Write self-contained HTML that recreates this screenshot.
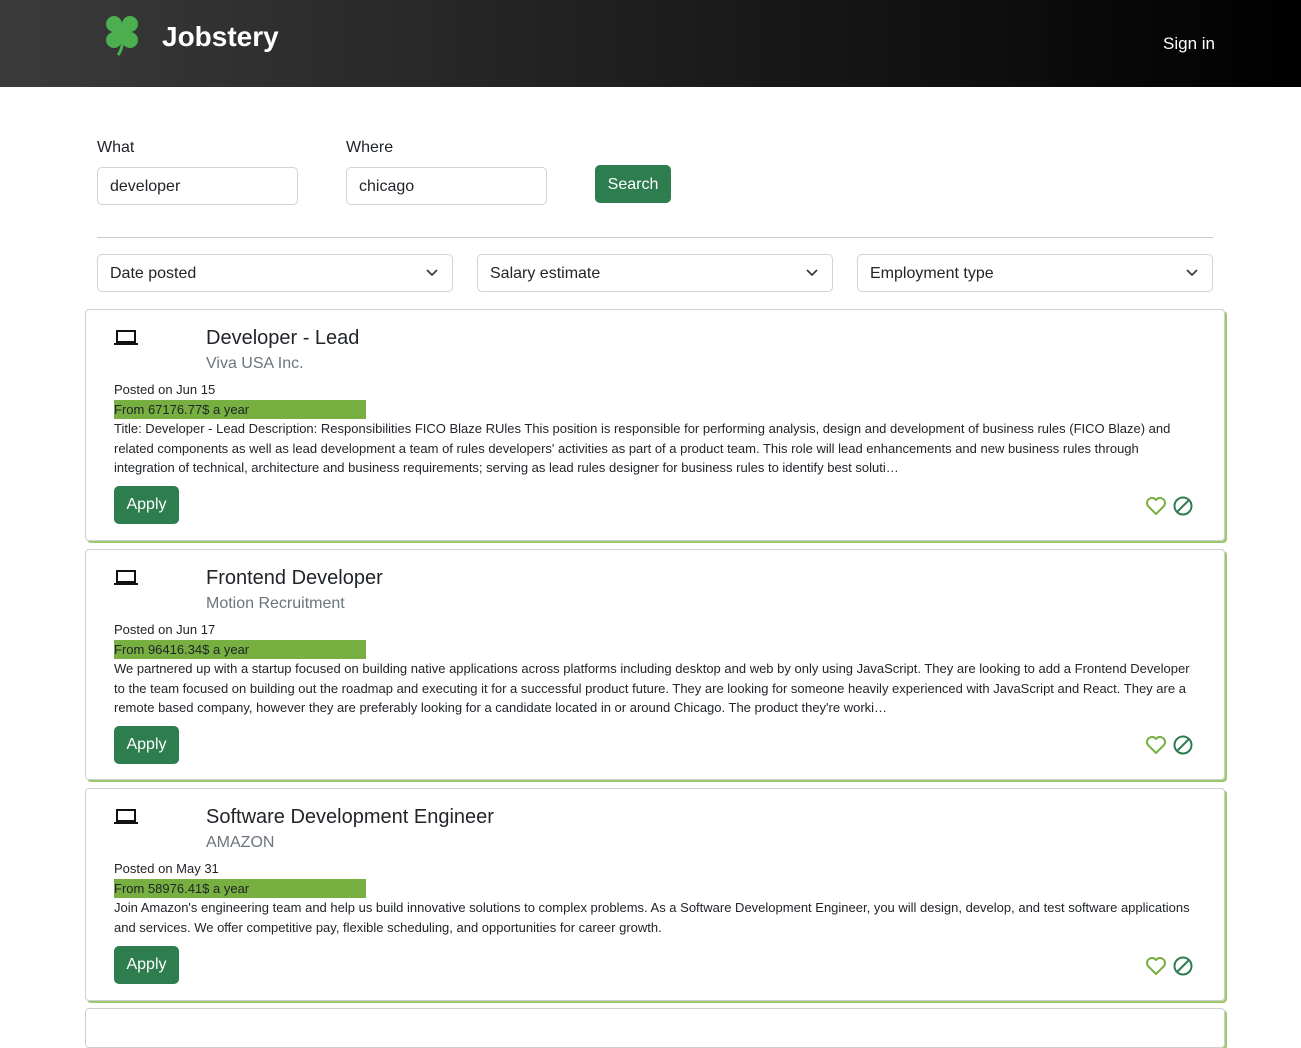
<!DOCTYPE html>
<html><head><meta charset="utf-8"><style>
*{box-sizing:border-box;margin:0;padding:0}
body{width:1301px;height:1010px;overflow:hidden;background:#fff;font-family:"Liberation Sans",Arial,sans-serif;color:#212529}
.hdr{height:87px;background:linear-gradient(90deg,#3b3b3b,#000);position:relative}
.logo{position:absolute;left:102px;top:13px}
.brand{position:absolute;left:162px;top:21px;color:#fff;font-weight:bold;font-size:28px}
.sign{position:absolute;left:1163px;top:34px;color:#fff;font-size:17px}
.lbl{position:absolute;font-size:16px}
.inp{position:absolute;height:38px;border:1px solid #ced4da;border-radius:5px;font-size:16px;padding:10px 12px 0}
.btn{position:absolute;background:#2e7d4f;color:#fff;border-radius:5px;font-size:16px;text-align:center}
.hr{position:absolute;left:97px;top:237px;width:1116px;border-top:1px solid #ccc}
.sel{position:absolute;top:254px;height:38px;width:356px;border:1px solid #ced4da;border-radius:5px;font-size:16px;padding:10px 12px 0}
.sel svg{position:absolute;right:14px;top:14px}
.card{position:absolute;left:85px;width:1140px;border:1px solid #d0d0d0;border-radius:4px;box-shadow:2px 2px 0 #9cc96b}
.ic{position:absolute;left:28px;top:20px}
.t{position:absolute;left:120px;top:17px;font-size:20px}
.co{position:absolute;left:120px;top:45px;font-size:16px;color:#6c757d}
.po{position:absolute;left:28px;top:72px;font-size:13px}
.sal{position:absolute;left:28px;top:90px;width:252px;height:19px;background:#77b041;font-size:13px;line-height:19px}
.d{position:absolute;left:28px;top:109px;width:1078px;font-size:13px;line-height:19.6px}
.ap{position:absolute;left:28px;width:65px;height:38px;line-height:38px}
.hs{position:absolute;left:1059px}
</style></head><body>
<div class="hdr">
<svg class="logo" width="40" height="44" viewBox="0 0 40 44"><g fill="#4caf50"><circle cx="12" cy="11" r="8"/><circle cx="28" cy="11" r="8"/><circle cx="12" cy="27" r="8"/><circle cx="28" cy="27" r="8"/><circle cx="20" cy="19" r="8"/></g><path d="M20 22 Q22 34 16 42" stroke="#4caf50" stroke-width="3" fill="none"/></svg>
<div class="brand">Jobstery</div>
<div class="sign">Sign in</div>
</div>
<div class="lbl" style="left:97px;top:139px">What</div>
<div class="lbl" style="left:346px;top:139px">Where</div>
<div class="inp" style="left:97px;top:167px;width:201px">developer</div>
<div class="inp" style="left:346px;top:167px;width:201px">chicago</div>
<div class="btn" style="left:595px;top:165px;width:76px;height:38px;line-height:39px">Search</div>
<div class="hr"></div>
<div class="sel" style="left:97px">Date posted<svg width="12" height="8"><path d="M1 1l5 5 5-5" stroke="#333" stroke-width="1.6" fill="none"/></svg></div>
<div class="sel" style="left:477px">Salary estimate<svg width="12" height="8"><path d="M1 1l5 5 5-5" stroke="#333" stroke-width="1.6" fill="none"/></svg></div>
<div class="sel" style="left:857px">Employment type<svg width="12" height="8"><path d="M1 1l5 5 5-5" stroke="#333" stroke-width="1.6" fill="none"/></svg></div>

<div class="card" style="top:309px;height:232px">
<svg class="ic" width="24" height="16"><rect x="3" y="1" width="18" height="11" stroke="#111" stroke-width="2" fill="none"/><rect x="0" y="13" width="24" height="2" fill="#111"/></svg>
<div class="t">Developer - Lead</div><div class="co">Viva USA Inc.</div>
<div class="po">Posted on Jun 15</div><div class="sal">From 67176.77$ a year</div>
<div class="d">Title: Developer - Lead Description: Responsibilities FICO Blaze RUles This position is responsible for performing analysis, design and development of business rules (FICO Blaze) and related components as well as lead development a team of rules developers' activities as part of a product team. This role will lead enhancements and new business rules through integration of technical, architecture and business requirements; serving as lead rules designer for business rules to identify best soluti…</div>
<div class="btn ap" style="top:176px">Apply</div>
<svg class="hs" style="top:185px" width="50" height="22"><path d="M11 19 L3 11 A4.5 4.5 0 0 1 11 5 A4.5 4.5 0 0 1 19 11 Z" stroke="#77b041" stroke-width="2" fill="none" stroke-linejoin="round"/><circle cx="38" cy="11" r="8.5" stroke="#2e7d4f" stroke-width="2" fill="none"/><path d="M32 17 L44 5" stroke="#2e7d4f" stroke-width="2"/></svg>
</div>

<div class="card" style="top:549px;height:231px">
<svg class="ic" width="24" height="16"><rect x="3" y="1" width="18" height="11" stroke="#111" stroke-width="2" fill="none"/><rect x="0" y="13" width="24" height="2" fill="#111"/></svg>
<div class="t">Frontend Developer</div><div class="co">Motion Recruitment</div>
<div class="po">Posted on Jun 17</div><div class="sal">From 96416.34$ a year</div>
<div class="d">We partnered up with a startup focused on building native applications across platforms including desktop and web by only using JavaScript. They are looking to add a Frontend Developer to the team focused on building out the roadmap and executing it for a successful product future. They are looking for someone heavily experienced with JavaScript and React. They are a remote based company, however they are preferably looking for a candidate located in or around Chicago. The product they're worki…</div>
<div class="btn ap" style="top:176px">Apply</div>
<svg class="hs" style="top:184px" width="50" height="22"><path d="M11 19 L3 11 A4.5 4.5 0 0 1 11 5 A4.5 4.5 0 0 1 19 11 Z" stroke="#77b041" stroke-width="2" fill="none" stroke-linejoin="round"/><circle cx="38" cy="11" r="8.5" stroke="#2e7d4f" stroke-width="2" fill="none"/><path d="M32 17 L44 5" stroke="#2e7d4f" stroke-width="2"/></svg>
</div>

<div class="card" style="top:788px;height:213px">
<svg class="ic" width="24" height="16"><rect x="3" y="1" width="18" height="11" stroke="#111" stroke-width="2" fill="none"/><rect x="0" y="13" width="24" height="2" fill="#111"/></svg>
<div class="t">Software Development Engineer</div><div class="co">AMAZON</div>
<div class="po">Posted on May 31</div><div class="sal">From 58976.41$ a year</div>
<div class="d">Join Amazon's engineering team and help us build innovative solutions to complex problems. As a Software Development Engineer, you will design, develop, and test software applications and services. We offer competitive pay, flexible scheduling, and opportunities for career growth.</div>
<div class="btn ap" style="top:157px">Apply</div>
<svg class="hs" style="top:166px" width="50" height="22"><path d="M11 19 L3 11 A4.5 4.5 0 0 1 11 5 A4.5 4.5 0 0 1 19 11 Z" stroke="#77b041" stroke-width="2" fill="none" stroke-linejoin="round"/><circle cx="38" cy="11" r="8.5" stroke="#2e7d4f" stroke-width="2" fill="none"/><path d="M32 17 L44 5" stroke="#2e7d4f" stroke-width="2"/></svg>
</div>
<div class="card" style="top:1008px;height:40px"></div>
</body></html>
